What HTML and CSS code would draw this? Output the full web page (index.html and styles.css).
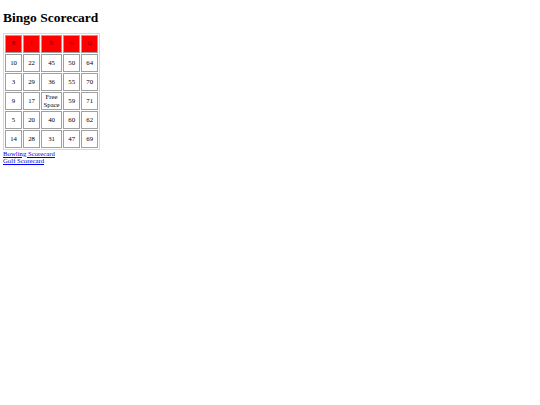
FILE: index.html
```html
<!DOCTYPE html>
<html>
<head>
<meta charset="utf-8">
<title>Bingo Scorecard</title>
<link rel="stylesheet" href="styles.css">
</head>
<body class="page">
<h1 class="title">Bingo Scorecard</h1>
<table class="card">
  <tr>
    <th class="hcell">B</th><th class="hcell">I</th><th class="hcell">N</th><th class="hcell">G</th><th class="hcell">O</th>
  </tr>
  <tr><td class="cell">10</td><td class="cell">22</td><td class="cell">45</td><td class="cell">50</td><td class="cell">64</td></tr>
  <tr><td class="cell">3</td><td class="cell">29</td><td class="cell">36</td><td class="cell">55</td><td class="cell">70</td></tr>
  <tr><td class="cell">9</td><td class="cell">17</td><td class="cell">Free Space</td><td class="cell">59</td><td class="cell">71</td></tr>
  <tr><td class="cell">5</td><td class="cell">20</td><td class="cell">40</td><td class="cell">60</td><td class="cell">62</td></tr>
  <tr><td class="cell">14</td><td class="cell">28</td><td class="cell">31</td><td class="cell">47</td><td class="cell">69</td></tr>
</table>
<a class="link" href="#">Bowling Scorecard</a><br>
<a class="link" href="#">Golf Scorecard</a>
</body>
</html>
```
FILE: styles.css
```css
.page {
  margin: 3px;
  font-family: "Liberation Serif", "Times New Roman", serif;
  font-size: 6.75px;
  background: #fff;
  color: #000;
}
.title {
  font-size: 13.5px;
  font-weight: bold;
  margin: 7px 0;
  line-height: 15.5px;
}
.card {
  border: 1px solid #d8d8d8;
  border-spacing: 1px;
  text-align: center;
}
.hcell,
.cell {
  box-sizing: border-box;
  border: 1px solid #a0a0a0;
  width: 17px;
  height: 18px;
  padding: 0 1.5px;
  line-height: 7.8px;
  font-weight: normal;
}
.hcell {
  background: #ff0000;
  color: #7a0000;
  font-size: 5.5px;
}
.cell {
  background: #fff;
}
.link {
  color: #0000ee;
  text-decoration: underline;
  line-height: 7.5px;
}
```
